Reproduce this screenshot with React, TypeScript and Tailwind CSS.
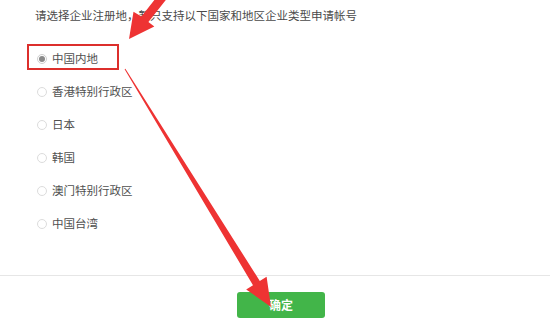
import React from "react";

const options = ["中国内地", "香港特别行政区", "日本", "韩国", "澳门特别行政区", "中国台湾"];

export default function App() {
  return (
    <div
      className="relative w-[550px] h-[325px] overflow-hidden bg-white text-[#4a4a4a]"
      style={{ fontFamily: '"Noto Sans CJK SC", "Noto Sans", sans-serif' }}
    >
      <div className="flex h-[31px] items-center pl-[35px] text-[11.5px]">
        请选择企业注册地，暂只支持以下国家和地区企业类型申请帐号
      </div>
      <div className="mt-[11px] flex flex-col">
        {options.map((o, i) => (
          <label key={o} className="flex h-[33px] items-center pl-[37px] text-[11.5px] text-[#505050]">
            <span
              className={`mr-[5px] flex h-[10px] w-[10px] items-center justify-center rounded-full border ${
                i === 0 ? "border-[#cfcfcf]" : "border-[#dcdcdc]"
              }`}
            >
              {i === 0 && <span className="h-[6px] w-[6px] rounded-full bg-[#8a8a8a]" />}
            </span>
            {o}
          </label>
        ))}
      </div>
      <div className="mt-[35px] h-px w-full bg-[#e6e6e6]" />
      <div className="mt-[16px] flex justify-center pl-[12px]">
        <button className="flex h-[26px] w-[88px] items-center justify-center rounded-[3px] bg-[#42b549] text-[12px] font-semibold text-white">
          确定
        </button>
      </div>

      {/* annotation box */}
      <div className="pointer-events-none absolute left-[27px] top-[44px] h-[26px] w-[92px] border-2 border-[#dc2f2c]" />

      {/* annotation arrows */}
      <svg className="pointer-events-none absolute left-0 top-0" width="550" height="325" viewBox="0 0 550 325">
        <polygon
          fill="#ee3333"
          points="171.5,-7.2 148.4,22 154.3,26.6 129,39 133.5,11.8 141.4,16.4 164.5,-12.8"
        />
        <polygon
          fill="#ee3333"
          points="125.4,68.7 259.8,281.0 266.6,276.8 271,307 246.2,289.4 253.0,285.2 124.6,69.3"
        />
      </svg>
    </div>
  );
}
